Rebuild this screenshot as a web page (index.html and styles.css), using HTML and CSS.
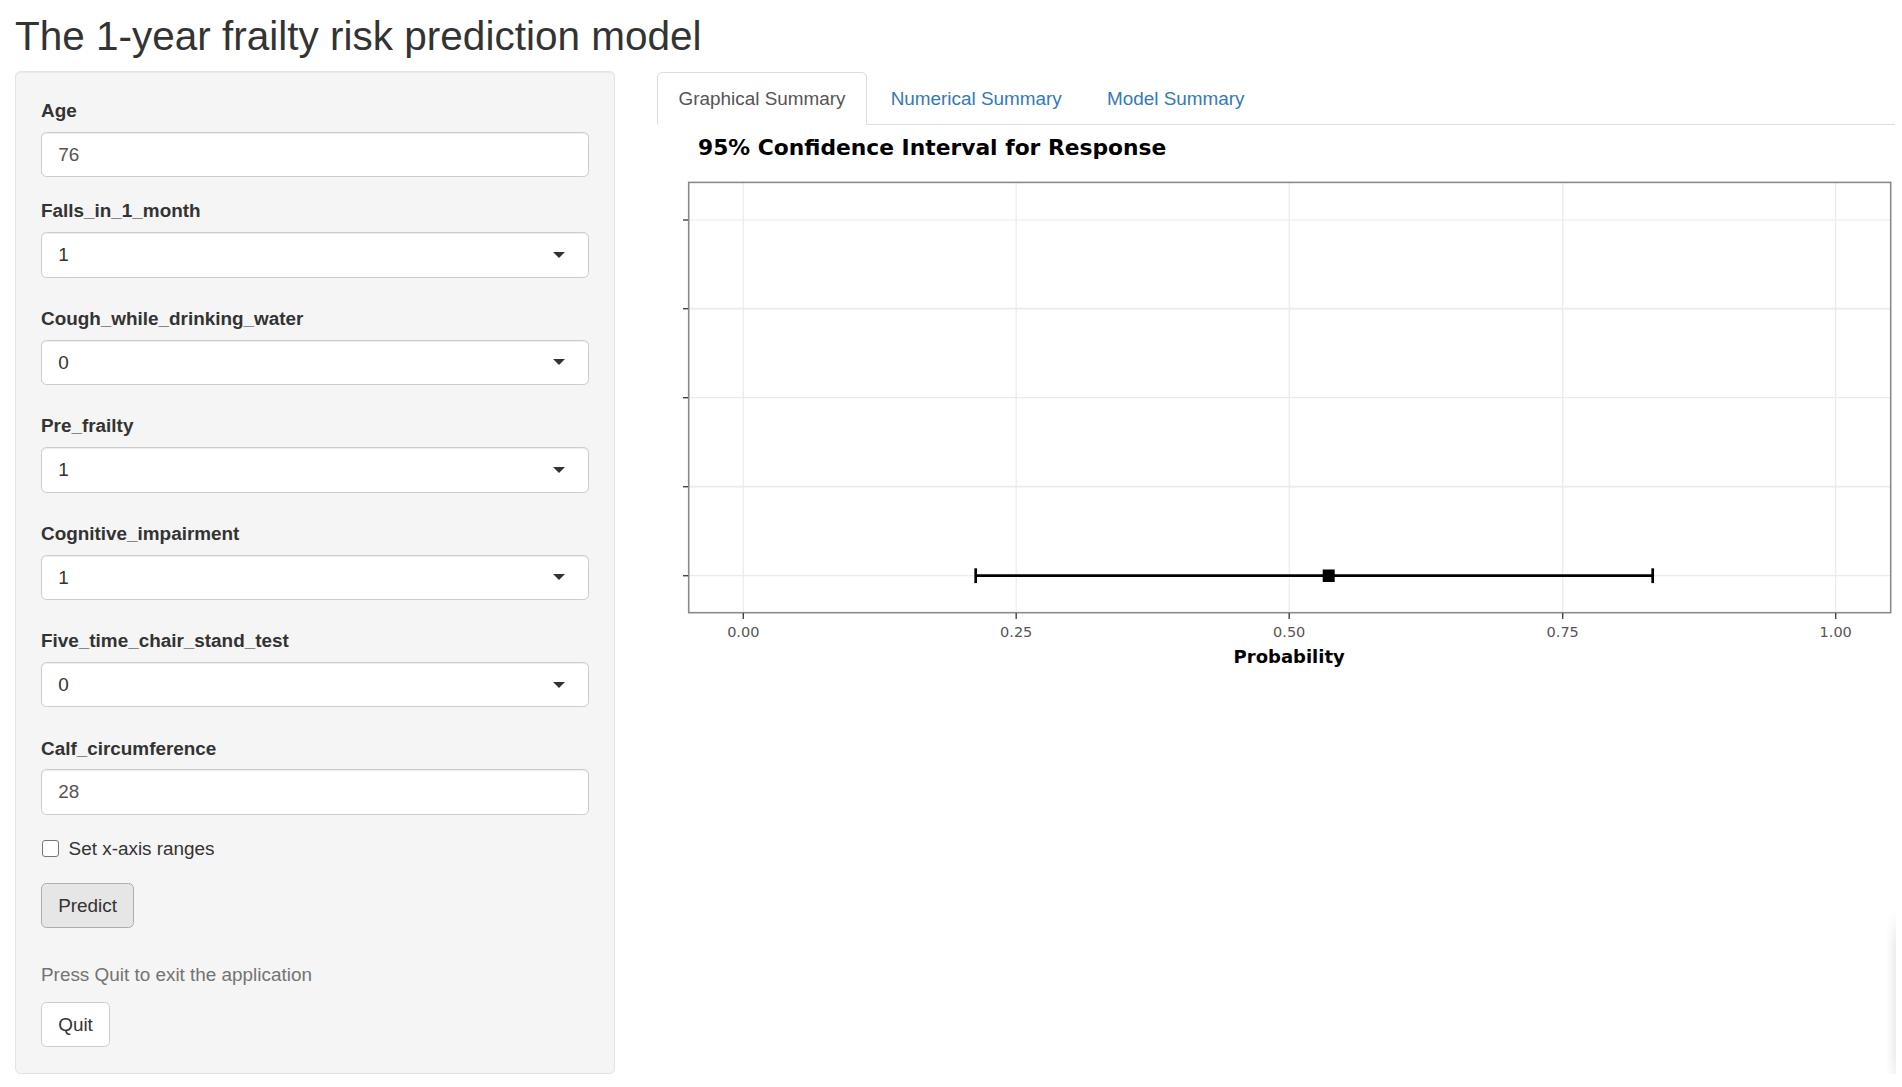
FILE: index.html
```html
<!DOCTYPE html>
<html lang="en">
<head>
<meta charset="utf-8">
<title>The 1-year frailty risk prediction model</title>
<link rel="stylesheet" href="styles.css">
</head>
<body>
<div class="page">
  <h2 class="title">The 1-year frailty risk prediction model</h2>
  <div class="layout">
    <aside class="well">
      <div class="group">
        <label class="lbl">Age</label>
        <div class="input">76</div>
      </div>
      <div class="group select-group">
        <label class="lbl">Falls_in_1_month</label>
        <div class="input select">1<span class="caret"></span></div>
      </div>
      <div class="group select-group">
        <label class="lbl">Cough_while_drinking_water</label>
        <div class="input select">0<span class="caret"></span></div>
      </div>
      <div class="group select-group">
        <label class="lbl">Pre_frailty</label>
        <div class="input select">1<span class="caret"></span></div>
      </div>
      <div class="group select-group">
        <label class="lbl">Cognitive_impairment</label>
        <div class="input select">1<span class="caret"></span></div>
      </div>
      <div class="group select-group">
        <label class="lbl">Five_time_chair_stand_test</label>
        <div class="input select">0<span class="caret"></span></div>
      </div>
      <div class="group">
        <label class="lbl">Calf_circumference</label>
        <div class="input">28</div>
      </div>
      <label class="check"><span class="box"></span>Set x-axis ranges</label>
      <button class="btn btn-active">Predict</button>
      <p class="help">Press Quit to exit the application</p>
      <button class="btn">Quit</button>
    </aside>
    <main class="main">
      <ul class="tabs">
        <li class="tab active">Graphical Summary</li>
        <li class="tab">Numerical Summary</li>
        <li class="tab">Model Summary</li>
      </ul>
      <svg class="plot" width="1238" height="560" viewBox="0 0 1238 560">
        <text class="ptitle" x="41" y="29.5">95% Confidence Interval for Response</text>
        <g class="grid">
          <line x1="31.7" x2="1233.7" y1="95" y2="95"/>
          <line class="g2" x1="31.7" x2="1233.7" y1="183.7" y2="183.7"/>
          <line x1="31.7" x2="1233.7" y1="272.7" y2="272.7"/>
          <line class="g2" x1="31.7" x2="1233.7" y1="361.7" y2="361.7"/>
          <line x1="31.7" x2="1233.7" y1="450.7" y2="450.7"/>
          <line x1="86.3" x2="86.3" y1="57.4" y2="487.7"/>
          <line x1="359.2" x2="359.2" y1="57.4" y2="487.7"/>
          <line x1="632.2" x2="632.2" y1="57.4" y2="487.7"/>
          <line x1="905.7" x2="905.7" y1="57.4" y2="487.7"/>
          <line x1="1178.7" x2="1178.7" y1="57.4" y2="487.7"/>
        </g>
        <rect class="frame" x="31.7" y="57.4" width="1202" height="430.3"/>
        <g class="ticks">
          <line x1="26" x2="31" y1="95" y2="95"/>
          <line x1="26" x2="31" y1="183.7" y2="183.7"/>
          <line x1="26" x2="31" y1="272.7" y2="272.7"/>
          <line x1="26" x2="31" y1="361.7" y2="361.7"/>
          <line x1="26" x2="31" y1="450.7" y2="450.7"/>
          <line x1="86.3" x2="86.3" y1="488" y2="494"/>
          <line x1="359.2" x2="359.2" y1="488" y2="494"/>
          <line x1="632.2" x2="632.2" y1="488" y2="494"/>
          <line x1="905.7" x2="905.7" y1="488" y2="494"/>
          <line x1="1178.7" x2="1178.7" y1="488" y2="494"/>
        </g>
        <g class="xlab">
          <text x="86.3" y="511.5">0.00</text>
          <text x="359.2" y="511.5">0.25</text>
          <text x="632.2" y="511.5">0.50</text>
          <text x="905.7" y="511.5">0.75</text>
          <text x="1178.7" y="511.5">1.00</text>
        </g>
        <text class="xtitle" x="632.2" y="538">Probability</text>
        <g class="ci">
          <line x1="318.7" x2="995.7" y1="450.7" y2="450.7"/>
          <line x1="318.7" x2="318.7" y1="443.3" y2="458.1"/>
          <line x1="995.7" x2="995.7" y1="443.3" y2="458.1"/>
          <rect class="pt" x="665.7" y="444.5" width="12" height="12.5"/>
        </g>
      </svg>
    </main>
  </div>
  <div class="edge-shadow"></div>
</div>
</body>
</html>
```

FILE: styles.css
```css
* { box-sizing: border-box; }
html, body { margin: 0; background: #fff; }
body {
  font-family: "Liberation Sans", Arial, Helvetica, sans-serif;
  font-size: 18.9px;
  line-height: 27px;
  color: #333;
}
.page { padding: 0 7px 0 15px; position: relative; }
.title {
  margin: 13.7px 0 12.7px;
  font-size: 40.5px;
  line-height: 44.5px;
  font-weight: 400;
  color: #333;
}
.layout { display: flex; gap: 42.3px; align-items: flex-start; }
.well {
  width: 600px;
  flex: none;
  background: #f5f5f5;
  border: 1px solid #e3e3e3;
  border-radius: 5.4px;
  box-shadow: inset 0 1px 1px rgba(0,0,0,.05);
  padding: 25px 25px 25.6px;
}
.group { margin-bottom: 20.3px; }
.select-group { margin-bottom: 27.3px; }
.lbl { display: block; font-weight: 700; margin-bottom: 7.7px; }
.input {
  position: relative;
  height: 45.5px;
  border: 1px solid #ccc;
  border-radius: 5.4px;
  background: #fff;
  padding: 0 16.2px;
  line-height: 43.5px;
  color: #555;
  box-shadow: inset 0 1px 1px rgba(0,0,0,.075);
}
.select { color: #333; }
.caret {
  position: absolute;
  right: 23px;
  top: 50%;
  margin-top: -3px;
  width: 0; height: 0;
  border-style: solid;
  border-width: 6.75px 6.75px 0;
  border-color: #333 transparent transparent;
}
.check {
  display: flex;
  align-items: center;
  gap: 10px;
  height: 27px;
  margin-bottom: 20.3px;
}
.box {
  width: 17px; height: 17px;
  border: 1.3px solid #767676;
  border-radius: 3px;
  background: #fff;
  margin-left: 0.6px;
}
.btn {
  display: block;
  height: 45px;
  padding: 0 16.2px;
  border: 1px solid #ccc;
  border-radius: 5.4px;
  background: #fff;
  font: inherit;
  line-height: 43px;
  color: #333;
}
.btn-active { background: #e6e6e6; border-color: #adadad; }
.help { margin: 33.5px 0 13.9px; color: #737373; }
.main { flex: 1; min-width: 0; padding-top: 0.7px; }
.tabs {
  display: flex;
  margin: 0; padding: 0;
  list-style: none;
  border-bottom: 1px solid #ddd;
}
.tab {
  padding: 12.3px 20.25px;
  line-height: 27px;
  border: 1px solid transparent;
  border-radius: 5.4px 5.4px 0 0;
  margin: 0 2.7px -1px 0;
  color: #337ab7;
}
.tab.active { color: #555; background: #fff; border-color: #ddd #ddd transparent; }
.plot { display: block; overflow: visible; }
.ptitle { font-family: "DejaVu Sans", Verdana, sans-serif; font-weight: 700; font-size: 21.8px; fill: #000; }
.grid line { stroke: #ebebeb; stroke-width: 1.2; }
.grid line.g2 { stroke-width: 1.8; }
.frame { fill: none; stroke: #8a8a8a; stroke-width: 1.6; }
.ticks line { stroke: #444; stroke-width: 1.4; }
.xlab text { font-family: "DejaVu Sans", Verdana, sans-serif; font-size: 14.5px; fill: #555; text-anchor: middle; }
.xtitle { font-family: "DejaVu Sans", Verdana, sans-serif; font-weight: 700; font-size: 18px; fill: #000; text-anchor: middle; }
.ci line { stroke: #000; stroke-width: 2.7; }
.pt { fill: #000; }
.edge-shadow {
  position: absolute;
  left: 1886px; top: 895px;
  width: 10px; height: 186px;
  background: linear-gradient(to right, rgba(0,0,0,0), rgba(0,0,0,.07));
  -webkit-mask-image: linear-gradient(to bottom, transparent, #000 20%, #000 80%, transparent);
  mask-image: linear-gradient(to bottom, transparent, #000 20%, #000 80%, transparent);
}
```
